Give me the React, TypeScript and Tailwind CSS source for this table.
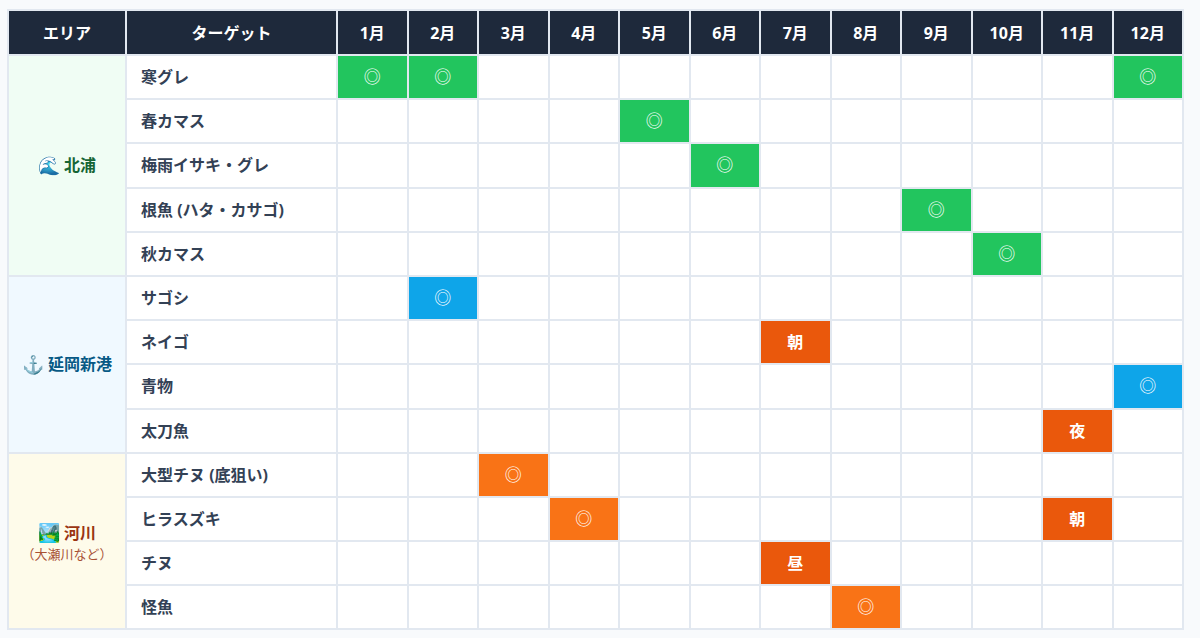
import React from 'react';

type Mark = { month: number; label: string; color: string };
type Target = { name: string; marks: Mark[] };
type Area = { icon: string; name: string; sub?: string; bg: string; text: string; targets: Target[] };

const GREEN = 'bg-[#22c55e]';
const BLUE = 'bg-[#0ea5e9]';
const ORANGE = 'bg-[#f97316]';
const DARK = 'bg-[#ea580c]';

const areas: Area[] = [
  {
    icon: '🌊',
    name: '北浦',
    bg: 'bg-[#f0fdf4]',
    text: 'text-[#166534]',
    targets: [
      {
        name: '寒グレ',
        marks: [
          { month: 1, label: '◎', color: GREEN },
          { month: 2, label: '◎', color: GREEN },
          { month: 12, label: '◎', color: GREEN },
        ],
      },
      { name: '春カマス', marks: [{ month: 5, label: '◎', color: GREEN }] },
      { name: '梅雨イサキ・グレ', marks: [{ month: 6, label: '◎', color: GREEN }] },
      { name: '根魚 (ハタ・カサゴ)', marks: [{ month: 9, label: '◎', color: GREEN }] },
      { name: '秋カマス', marks: [{ month: 10, label: '◎', color: GREEN }] },
    ],
  },
  {
    icon: '⚓',
    name: '延岡新港',
    bg: 'bg-[#f0f9ff]',
    text: 'text-[#075985]',
    targets: [
      { name: 'サゴシ', marks: [{ month: 2, label: '◎', color: BLUE }] },
      { name: 'ネイゴ', marks: [{ month: 7, label: '朝', color: DARK }] },
      { name: '青物', marks: [{ month: 12, label: '◎', color: BLUE }] },
      { name: '太刀魚', marks: [{ month: 11, label: '夜', color: DARK }] },
    ],
  },
  {
    icon: '🏞️',
    name: '河川',
    sub: '（大瀬川など）',
    bg: 'bg-[#fefbea]',
    text: 'text-[#9a3412]',
    targets: [
      { name: '大型チヌ (底狙い)', marks: [{ month: 3, label: '◎', color: ORANGE }] },
      {
        name: 'ヒラスズキ',
        marks: [
          { month: 4, label: '◎', color: ORANGE },
          { month: 11, label: '朝', color: DARK },
        ],
      },
      { name: 'チヌ', marks: [{ month: 7, label: '昼', color: DARK }] },
      { name: '怪魚', marks: [{ month: 8, label: '◎', color: ORANGE }] },
    ],
  },
];

const months = Array.from({ length: 12 }, (_, i) => i + 1);

const MonthCell = ({ mark }: { mark?: Mark }) => {
  if (!mark) {
    return <td className="border-2 border-[#e2e8f0] bg-white" />;
  }
  const isSymbol = mark.label === '◎';
  return (
    <td className={`border-2 border-[#e2e8f0] text-center text-white ${mark.color}`}>
      {isSymbol ? (
        <span className="text-[17px] font-normal leading-none">◎</span>
      ) : (
        <span className="text-[16px] font-bold">{mark.label}</span>
      )}
    </td>
  );
};

export default function App() {
  return (
    <div
      className="min-h-[638px] bg-[#f8fafc] pl-[7px] pt-[9px]"
      style={{ fontFamily: '"Noto Sans", "Noto Sans CJK JP", sans-serif' }}
    >
      <table className="w-[1177px] table-fixed border-collapse border-2 border-[#e2e8f0]">
        <colgroup>
          <col className="w-[118px]" />
          <col className="w-[211px]" />
          {months.map((m) => (
            <col key={m} />
          ))}
        </colgroup>
        <thead>
          <tr className="h-[45px] bg-[#1e293b] text-[16px] font-bold text-white">
            <th className="border-2 border-[#e2e8f0]">エリア</th>
            <th className="border-2 border-[#e2e8f0]">ターゲット</th>
            {months.map((m) => (
              <th key={m} className="border-2 border-[#e2e8f0]">
                {m}月
              </th>
            ))}
          </tr>
        </thead>
        <tbody>
          {areas.map((area) =>
            area.targets.map((target, idx) => (
              <tr key={target.name} className="h-[44.2px]">
                {idx === 0 && (
                  <td
                    rowSpan={area.targets.length}
                    className={`border-2 border-[#e2e8f0] text-center ${area.bg} ${area.text}`}
                  >
                    <div className="flex items-center justify-center gap-1 text-[16px] font-bold">
                      <span className="text-[18px]">{area.icon}</span>
                      <span>{area.name}</span>
                    </div>
                    {area.sub && <div className="text-[13px] leading-tight opacity-85">{area.sub}</div>}
                  </td>
                )}
                <td className="border-2 border-[#e2e8f0] bg-white pl-[14px] text-[16px] font-bold text-[#334155]">
                  {target.name}
                </td>
                {months.map((m) => (
                  <MonthCell key={m} mark={target.marks.find((mk) => mk.month === m)} />
                ))}
              </tr>
            ))
          )}
        </tbody>
      </table>
    </div>
  );
}
